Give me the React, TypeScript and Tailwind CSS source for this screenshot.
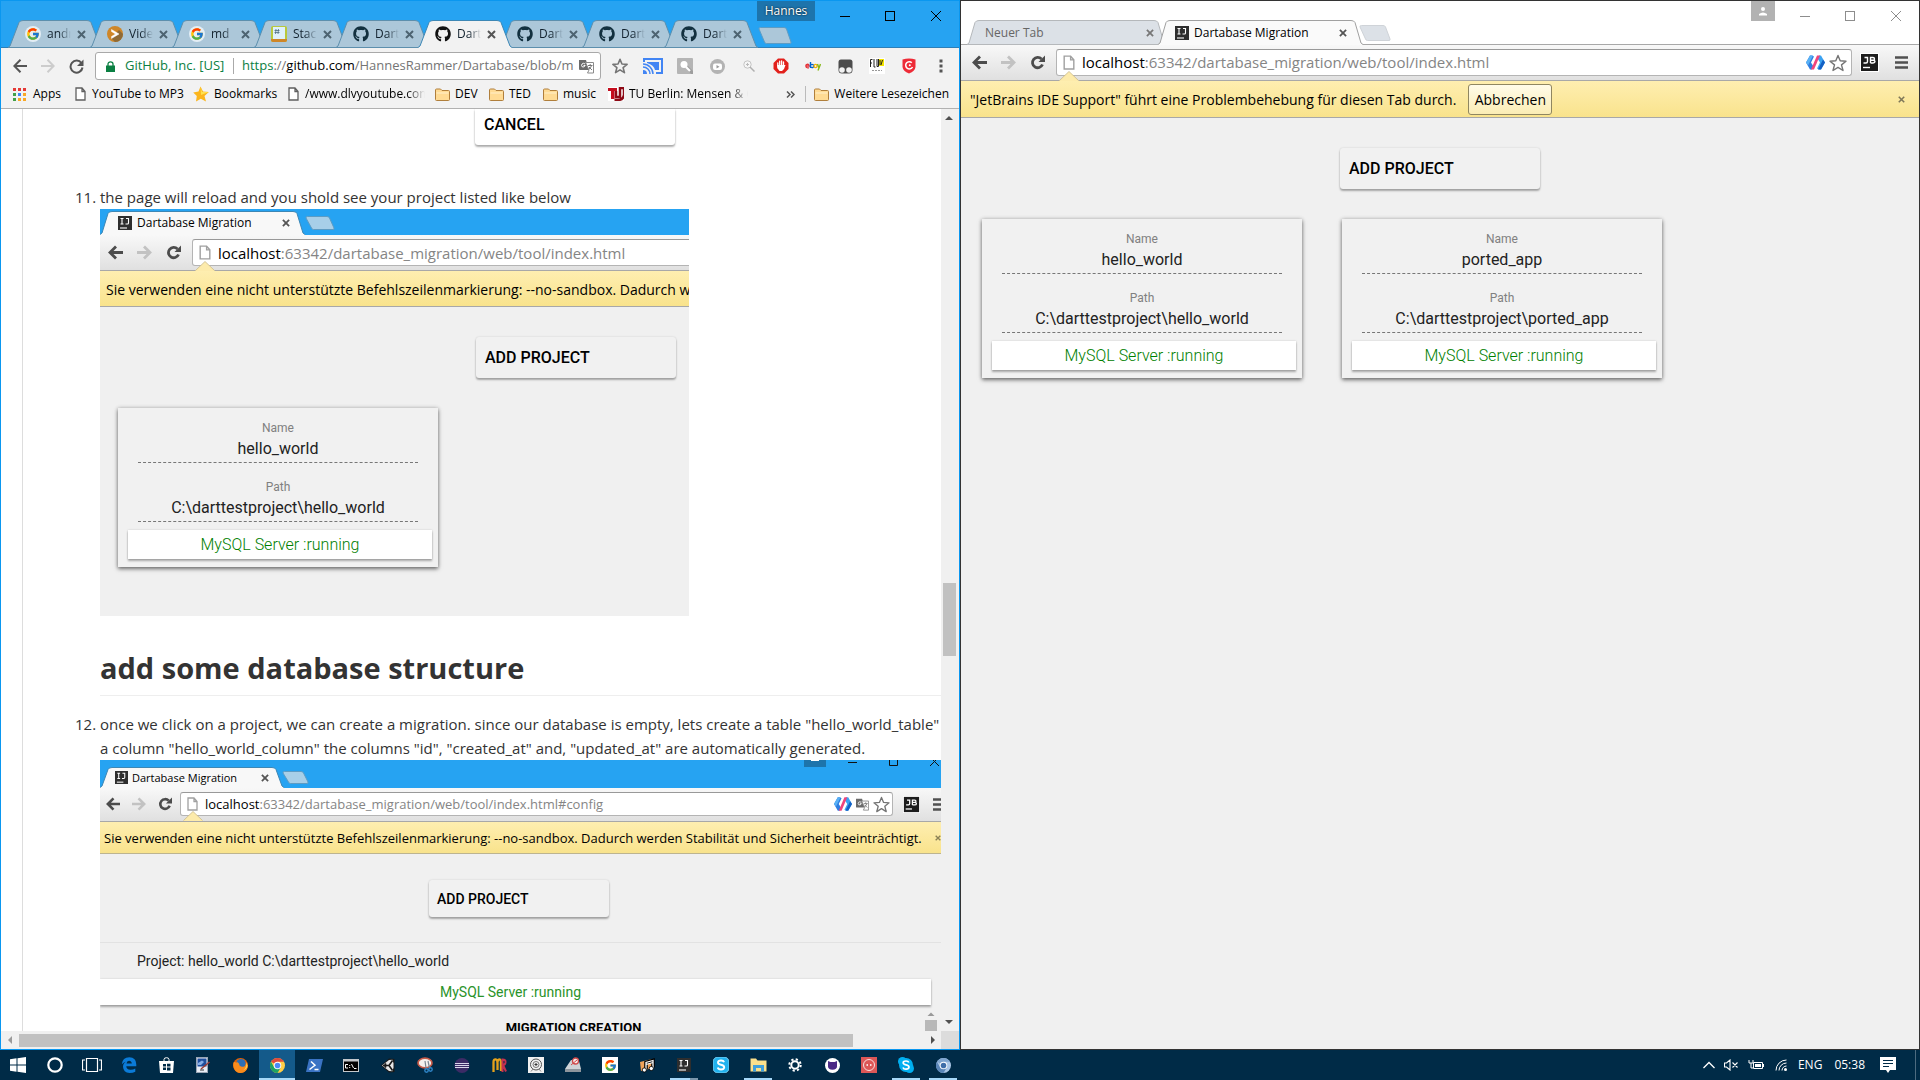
import React from "react";
import { FaGithub } from "react-icons/fa";
import { FcGoogle } from "react-icons/fc";

/* ---------- shapes ---------- */

function TabShape({ w, h, fill, stroke, slope = 12, open = true }: { w: number; h: number; fill: string; stroke: string; slope?: number; open?: boolean }) {
  const d = `M0 ${h - 0.5} L2 ${h - 2} L${slope - 1} 2.5 Q${slope} 0.5 ${slope + 3} 0.5 H${w - slope - 3} Q${w - slope} 0.5 ${w - slope + 1} 2.5 L${w - 2} ${h - 2} L${w} ${h - 0.5}`;
  return (
    <svg className="absolute inset-0" width={w} height={h} viewBox={`0 0 ${w} ${h}`} aria-hidden="true">
      <path d={`${d} V${h} H0 Z`} fill={fill} />
      <path d={open ? d : `${d} Z`} fill="none" stroke={stroke} />
    </svg>
  );
}

function NewTabShape({ w, h, fill, stroke }: { w: number; h: number; fill: string; stroke: string }) {
  return (
    <svg width={w} height={h} viewBox={`0 0 ${w} ${h}`} aria-hidden="true">
      <path d={`M2.5 0.5 H${w - 8} Q${w - 6} 0.5 ${w - 5.5} 2 L${w - 1} ${h - 2} Q${w - 0.5} ${h - 0.5} ${w - 2} ${h - 0.5} H8.5 Q7 ${h - 0.5} 6.5 ${h - 2} L1 2 Q0.5 0.5 2.5 0.5Z`} fill={fill} stroke={stroke} />
    </svg>
  );
}

function Cross({ size = 9, color = "#4f5b66", width = 2 }: { size?: number; color?: string; width?: number }) {
  return (
    <svg width={size} height={size} viewBox="0 0 9 9" aria-hidden="true">
      <path d="M1 1 L8 8 M8 1 L1 8" stroke={color} strokeWidth={width} />
    </svg>
  );
}

function IjIcon({ size = 14 }: { size?: number }) {
  return (
    <svg width={size} height={size} viewBox="0 0 14 14" aria-hidden="true">
      <rect width="14" height="14" fill="#2e2e2e" />
      <path d="M2.500 2.500 H5.500 M4 2.500 V8 M2.500 8 H5.500 M8 2.500 H10.500 V7 Q10.500 8 9.500 8 H7.500" stroke="#fff" strokeWidth="1.100" fill="none" />
      <path d="M2 12 H9" stroke="#fff" strokeWidth="1.100" />
    </svg>
  );
}

function JbIcon({ size = 19 }: { size?: number }) {
  return (
    <svg width={size} height={size} viewBox="0 0 19 19" aria-hidden="true">
      <rect width="19" height="19" fill="#fff" />
      <rect x="1" y="1" width="17" height="17" fill="#1c1c1c" />
      <path d="M4.500 4.500 H7.500 V8.500 Q7.500 10 6 10 H3.500 M10.500 10 V4.500 H13 Q14.500 4.500 14.500 5.900 Q14.500 7.200 13 7.200 H10.500 M13 7.200 Q15 7.200 15 8.600 Q15 10 13 10 H10.500" stroke="#fff" strokeWidth="1.400" fill="none" />
      <path d="M3 14.500 H10" stroke="#fff" strokeWidth="1.400" />
    </svg>
  );
}

function PolymerIcon({ size = 19 }: { size?: number }) {
  return (
    <svg width={size} height={size} viewBox="0 0 19 16" aria-hidden="true">
      <path d="M6 1 L4 1 L0 8 L4 15 H6 L7.500 12 L5 8 L8 2Z" fill="#2f7de1" />
      <path d="M13 15 H15 L19 8 L15 1 H13 L11.500 4 L14 8 L11 14Z" fill="#3ba3f2" />
      <path d="M4 1 L0 8 L2 11 L7 1Z" fill="#58b1f5" />
      <path d="M15 15 L19 8 L17 5 L12 15Z" fill="#1560c4" />
      <path d="M11 1 H14 L8 15 H5Z" fill="#f0447c" />
    </svg>
  );
}

function StarOutline({ size = 17, width = 1.4 }: { size?: number; width?: number }) {
  return (
    <svg width={size} height={size} viewBox="0 0 18 18" aria-hidden="true">
      <path d="M9 1.500 L11.200 6.800 L17 7.200 L12.500 10.900 L14 16.500 L9 13.400 L4 16.500 L5.500 10.900 L1 7.200 L6.800 6.800Z" fill="none" stroke="#757575" strokeWidth={width} strokeLinejoin="round" />
    </svg>
  );
}

function PageIcon({ w = 11, color = "#5f5f5f" }: { w?: number; color?: string }) {
  return (
    <svg width={w} height={w + 3} viewBox="0 0 11 14" aria-hidden="true">
      <path d="M1 1 H7 L10 4.500 V13 H1Z M7 1 V4.500 H10" fill="#fff" stroke={color} strokeWidth="1.300" />
    </svg>
  );
}

function FolderIcon() {
  return (
    <svg width="15" height="13" viewBox="0 0 15 13" aria-hidden="true">
      <path d="M0.500 11.500 V2 Q0.500 1 1.500 1 H5.500 L7 2.500 H13.500 Q14.500 2.500 14.500 3.500 V11.500 Q14.500 12.500 13.500 12.500 H1.500 Q0.500 12.500 0.500 11.500Z" fill="#ffdb94" stroke="#b07f3c" />
      <path d="M1.500 5 H13.500" stroke="#fff0cc" />
    </svg>
  );
}

function TranslateIcon({ size = 15 }: { size?: number }) {
  return (
    <svg width={size} height={size} viewBox="0 0 15 15" aria-hidden="true">
      <path d="M0 1 H7 L10 11 H1 Q0 11 0 10Z" fill="#6b6b6b" />
      <path d="M6.500 3.500 H14.500 V14 H8.500 L10 11Z" fill="#fff" stroke="#8a8a8a" />
      <path d="M6 5 Q4.500 3.600 3 5 Q2 6.500 3.200 7.800 Q5 8.800 6.200 6.500 H4.500" stroke="#fff" fill="none" />
      <path d="M9 6.500 H13.500 M11.200 5 V6.500 M12.500 6.500 Q12 9 9.500 10.500 M10 8 L13 11" stroke="#777" fill="none" />
    </svg>
  );
}

/* ---------- window controls ---------- */

function WindowControls({ color }: { color: string }) {
  return (
    <div className="flex h-[29px] items-center">
      <button type="button" aria-label="Minimize" className="flex w-[45px] justify-center">
        <svg width="10" height="10" viewBox="0 0 10 10"><path d="M0 5.500 H10" stroke={color} /></svg>
      </button>
      <button type="button" aria-label="Maximize" className="flex w-[45px] justify-center">
        <svg width="10" height="10" viewBox="0 0 10 10"><rect x="0.500" y="0.500" width="9" height="9" fill="none" stroke={color} /></svg>
      </button>
      <button type="button" aria-label="Close window" className="flex w-[47px] justify-center">
        <svg width="10" height="10" viewBox="0 0 10 10"><path d="M0 0 L10 10 M10 0 L0 10" stroke={color} /></svg>
      </button>
    </div>
  );
}

/* ---------- left browser ---------- */

function SizzleIcon() {
  return (
    <svg width="16" height="16" viewBox="0 0 16 16">
      <circle cx="8" cy="8" r="8" fill="#cf8628" />
      <path d="M8 16 A8 8 0 0 0 16 8 L12 4 L4 12Z" fill="#8f6a35" />
      <path d="M4.500 3.500 L12 8 L4.500 12.500 V10.500 L8.500 8 L4.500 5.500Z" fill="#fff" stroke="#fff" strokeWidth="0.500" />
    </svg>
  );
}

function StackIcon() {
  return (
    <svg width="16" height="16" viewBox="0 0 16 16">
      <rect width="16" height="16" rx="2" fill="#b9c83c" />
      <path d="M0 13 H16 V14 Q16 16 14 16 H2 Q0 16 0 14Z" fill="#cf8628" />
      <rect x="2" y="1" width="12" height="12" fill="#dff0fb" />
      <path d="M5 3 L4.500 8 M7.500 3 L7 8 M3.500 4.500 H8.500 M3.500 6.500 H8.500" stroke="#4f6f80" strokeWidth="0.800" />
    </svg>
  );
}

const leftTabs = [
  { title: "andr", icon: <FcGoogle size={14} />, round: true },
  { title: "Vide", icon: <SizzleIcon /> },
  { title: "md", icon: <FcGoogle size={14} />, round: true },
  { title: "Stac", icon: <StackIcon /> },
  { title: "Dart", icon: <FaGithub size={16} color="#12303f" /> },
  { title: "Dart", icon: <FaGithub size={16} color="#111" />, active: true },
  { title: "Dart", icon: <FaGithub size={16} color="#12303f" /> },
  { title: "Dart", icon: <FaGithub size={16} color="#12303f" /> },
  { title: "Dart", icon: <FaGithub size={16} color="#12303f" /> },
];

function LeftTabs() {
  return (
    <div className="relative flex h-[47px] items-end border-b border-[#2d7fb8] bg-[#26a3f2] pl-[7px]">
      <div role="tablist" aria-label="Open tabs" className="flex">
        {leftTabs.map((t, i) => (
          <div key={i} className={t.active ? "relative z-10 -mr-3 -mb-px h-7 w-[94px]" : "relative -mr-3 -mb-px h-7 w-[94px]"}>
            <TabShape w={94} h={28} fill={t.active ? "#f2f2f2" : "#acc7d9"} stroke={t.active ? "#3d87b5" : "#5d8fad"} open={!!t.active} />
            <div className="relative flex h-full items-center pl-[17px]">
              <button type="button" role="tab" aria-selected={!!t.active} className="flex items-center gap-1.5 text-[12px] text-[#12222e]">
                <span className={t.round ? "flex size-4 items-center justify-center rounded-full bg-[#e4eef5]" : "flex size-4"}>{t.icon}</span>
                <span className="w-6 overflow-hidden whitespace-nowrap text-left [mask-image:linear-gradient(to_right,black_50%,transparent)]">{t.title}</span>
              </button>
              <button type="button" aria-label={`Close tab ${i + 1}`} className="ml-1.5 flex"><Cross color={t.active ? "#555" : "#4d6371"} /></button>
            </div>
          </div>
        ))}
      </div>
      <button type="button" aria-label="New tab" className="mb-[3px] ml-3">
        <NewTabShape w={34} h={17} fill="#acc7d9" stroke="#5d9cc4" />
      </button>
      <div className="absolute top-0 right-0 flex">
        <button type="button" className="mr-[7px] h-5 w-[58px] bg-[#1d74ac] text-[12px] leading-5 text-white [text-shadow:0_0_2px_#000]">Hannes</button>
        <WindowControls color="#000" />
      </div>
    </div>
  );
}

function ThinArrow({ flip, color }: { flip?: boolean; color: string }) {
  return (
    <svg width="14" height="14" viewBox="0 0 14 14" className={flip ? "rotate-180" : ""} aria-hidden="true">
      <path d="M14 7 H1.500 M7.500 0.800 L1.300 7 L7.500 13.200" stroke={color} strokeWidth="2" fill="none" />
    </svg>
  );
}

const extensions: { label: string; icon: React.ReactNode }[] = [
  { label: "Cast", icon: <svg width="20" height="16" viewBox="0 0 20 16"><path d="M1 4 V1 H19 V15 H13" stroke="#4285f4" strokeWidth="2" fill="none" /><path d="M4 4 H16 V12 H12 Q11 7 4 5Z" fill="#4285f4" /><path d="M0 12 A4 4 0 0 1 4 16 H0Z" fill="#4285f4" /><path d="M0 9 A7 7 0 0 1 7 16 M0 6 A10 10 0 0 1 10 16" stroke="#4285f4" strokeWidth="1.500" fill="none" /></svg> },
  { label: "Search", icon: <svg width="16" height="16" viewBox="0 0 16 16"><rect width="16" height="16" rx="1" fill="#b5b5b5" /><path d="M9 10 L14 16 H16 V13 L11 8Z" fill="#9d9d9d" /><circle cx="7" cy="6.500" r="3.500" fill="#fff" /><path d="M9 9 L13 13" stroke="#fff" strokeWidth="2.200" /></svg> },
  { label: "Video", icon: <svg width="15" height="15" viewBox="0 0 15 15"><circle cx="7.500" cy="7.500" r="7.500" fill="#b3b3b3" /><rect x="3" y="4.500" width="9" height="6.500" rx="2" fill="#fff" /><path d="M6.500 6 L9.500 7.700 L6.500 9.500Z" fill="#999" /></svg> },
  { label: "Magnify", icon: <svg width="12" height="12" viewBox="0 0 12 12"><circle cx="4.500" cy="4.500" r="3.700" fill="#f6f6f6" stroke="#c4c4c4" /><path d="M7 7 L11.500 11.500" stroke="#b0b0b0" strokeWidth="1.500" /><path d="M3 4.500 H6 M4.500 3 V6" stroke="#bbb" /></svg> },
  { label: "Blocker", icon: <svg width="16" height="16" viewBox="0 0 16 16"><path d="M5 0.500 H11 L15.500 5 V11 L11 15.500 H5 L0.500 11 V5Z" fill="#e2211c" /><path d="M4.800 8 V5 M6.700 7.500 V3.200 M8.600 7.500 V2.800 M10.500 7.500 V3.800" stroke="#fff" strokeWidth="1.300" strokeLinecap="round" /><path d="M4.200 7 H11.100 L12.500 7 L11 11 L9 13 H6.500 L4.200 10Z" fill="#fff" /></svg> },
  { label: "eBay", icon: <svg width="16" height="10" viewBox="0 0 16 10"><path d="M1 5 H4.200 Q4 3.200 2.500 3.200 Q0.800 3.400 0.800 5 Q0.900 6.800 2.600 6.800 H4" fill="none" stroke="#e53238" strokeWidth="1.300" /><path d="M5.500 1 V7" stroke="#0064d2" strokeWidth="1.400" /><circle cx="7" cy="5" r="1.700" fill="none" stroke="#0064d2" strokeWidth="1.300" /><circle cx="10.500" cy="5" r="1.600" fill="none" stroke="#f5af02" strokeWidth="1.300" /><path d="M12.500 3 L14 7 M15.500 3 L13 9.500" stroke="#86b817" strokeWidth="1.400" /></svg> },
  { label: "Scripts", icon: <svg width="15" height="15" viewBox="0 0 15 15"><path d="M0.500 3 Q0.500 0.500 3 0.500 H12 Q14.500 0.500 14.500 3 V11 Q14.500 14.500 11 14.500 H4 Q0.500 14.500 0.500 11Z" fill="#4c4c4c" /><circle cx="4" cy="11" r="2.800" fill="#f2f2f2" /><circle cx="11" cy="11" r="2.800" fill="#f2f2f2" /></svg> },
  { label: "Flux", icon: <svg width="16" height="16" viewBox="0 0 16 16"><rect width="16" height="16" fill="#fff" /><rect x="10" y="1" width="5" height="7" fill="#f4e400" /><path d="M1.500 9 V1.500 H3.500 M1.500 5 H3 M5 1 V9 H6.500 M8 1 V8.500 H9.500 V1 M11 2 V7 M13.500 2 L12 7" stroke="#222" fill="none" /><path d="M3 12.500 H13" stroke="#999" strokeDasharray="2 1" /></svg> },
  { label: "Shield", icon: <svg width="14" height="16" viewBox="0 0 14 16"><path d="M0.500 1.500 Q7 -0.500 13.500 1.500 V9 Q13 13 7 15.500 Q1 13 0.500 9Z" fill="#ee2b37" /><path d="M9.800 4.700 A3.600 3.600 0 1 0 10.500 9" stroke="#fff" strokeWidth="1.500" fill="none" /><circle cx="7.800" cy="7.200" r="1" fill="#fff" /></svg> },
];

function LeftToolbar() {
  return (
    <div className="flex h-8 items-end bg-[#f2f2f2] pl-3">
      <div className="flex h-7 items-center gap-3.5 pr-[11px]">
        <button type="button" aria-label="Back"><ThinArrow color="#555" /></button>
        <button type="button" aria-label="Forward"><ThinArrow color="#ccc" flip /></button>
        <button type="button" aria-label="Reload">
          <svg width="15" height="15" viewBox="0 0 15 15" aria-hidden="true">
            <path d="M12.500 4.200 A6 6 0 1 0 13.500 8.500" stroke="#555" strokeWidth="2" fill="none" />
            <path d="M14.500 0.500 V7 H8Z" fill="#555" />
          </svg>
        </button>
      </div>
      <div className="relative flex h-7 min-w-0 flex-1 items-center rounded-[3px] border border-[#a9a9a9] bg-white pl-2.5 text-[13px] whitespace-nowrap">
        <input aria-label="Address" className="absolute inset-0 bg-transparent outline-none" />
        <svg width="9" height="11" viewBox="0 0 9 11" aria-hidden="true"><path d="M0 4.500 H9 V11 H0Z" fill="#0b8043" /><path d="M2 5 V3 A2.500 2.200 0 0 1 7 3 V5" stroke="#0b8043" strokeWidth="1.300" fill="none" /></svg>
        <span className="ml-2.5 w-[100px] text-[#0b8043]">GitHub, Inc. [US]</span>
        <span className="mx-2 h-4 w-px bg-[#aaa]" />
        <span className="min-w-0 flex-1 overflow-hidden text-[#757575]"><span className="text-[#0b8043]">https</span>://<span className="text-black">github.com</span>/HannesRammer/Dartabase/blob/m</span>
        <span className="mr-1.5"><TranslateIcon /></span>
      </div>
      <div className="flex h-7 items-center pr-4 pl-[11px]">
        <button type="button" aria-label="Bookmark this page" className="mr-[9px]"><StarOutline size={16} width={1.8} /></button>
        {extensions.map((e) => (
          <button type="button" key={e.label} aria-label={e.label} className="flex w-8 justify-center">{e.icon}</button>
        ))}
        <button type="button" aria-label="Menu" className="ml-3.5">
          <svg width="4" height="14" viewBox="0 0 4 14"><path d="M0.500 0.500h3v3h-3z M0.500 5.500h3v3h-3z M0.500 10.500h3v3h-3z" fill="#555" /></svg>
        </button>
      </div>
    </div>
  );
}

function Bookmark({ icon, children, fade, className }: { icon: React.ReactNode; children: string; fade?: boolean; className: string }) {
  return (
    <a href="#" className={`flex shrink-0 items-center ${className}`}>
      {icon}
      <span className={fade ? "min-w-0 flex-1 overflow-hidden [mask-image:linear-gradient(to_right,black_85%,transparent)]" : ""}>{children}</span>
    </a>
  );
}

function BookmarksBar() {
  const colors = ["#e53935", "#e53935", "#e53935", "#43a047", "#4285f4", "#f9a825", "#43a047", "#f9a825", "#f9a825"];
  return (
    <nav aria-label="Bookmarks" className="flex h-[29px] items-center border-b border-[#b1b1b1] bg-[#f2f2f2] pl-3 text-[12px] whitespace-nowrap text-black">
      <Bookmark className="w-[62px] gap-[7px]" icon={<svg width="13" height="13" viewBox="0 0 13 13" aria-hidden="true">{colors.map((c, i) => <rect key={i} x={(i % 3) * 5} y={Math.floor(i / 3) * 5} width="3" height="3" fill={c} />)}</svg>}>Apps</Bookmark>
      <Bookmark className="w-[118px] gap-1.5" icon={<PageIcon />}>YouTube to MP3</Bookmark>
      <Bookmark className="w-[95px] gap-[5px]" icon={<svg width="16" height="16" viewBox="0 0 16 16" aria-hidden="true"><path d="M7.500 0.500 L10 5.500 L15.800 6 L11.500 10 L13 15.500 L7.800 12.800 L3 15.500 L3.800 10 L0.200 6.500 L5.500 5.500Z" fill="#fbb51c" /><path d="M7.500 0.500 L9 6 L15.800 6 L8 9Z" fill="#ffe14d" /></svg>}>Bookmarks</Bookmark>
      <Bookmark className="mr-2.5 w-[137px] gap-1.5" fade icon={<PageIcon />}>/www.dlvyoutube.com</Bookmark>
      <Bookmark className="w-[54px] gap-[5px]" icon={<FolderIcon />}>DEV</Bookmark>
      <Bookmark className="w-[54px] gap-[5px]" icon={<FolderIcon />}>TED</Bookmark>
      <Bookmark className="w-[65px] gap-[5px]" icon={<FolderIcon />}>music</Bookmark>
      <Bookmark className="w-[140px] gap-[5px]" fade icon={<svg width="16" height="14" viewBox="0 0 16 14" aria-hidden="true"><rect width="16" height="14" fill="#fff" /><path d="M0 1 H9 V4 H6.500 V12 H3 V4 H0Z" fill="#c40d1e" /><path d="M8 4 V10 H12 V1 H16 V8 Q15 13 10 13 H6.500" fill="none" stroke="#8d0915" strokeWidth="2.500" /></svg>}>TU Berlin: Mensen &amp; C</Bookmark>
      <button type="button" aria-label="More bookmarks" className="ml-auto px-2.5">
        <svg width="9" height="7" viewBox="0 0 9 7"><path d="M1 0.500 L4 3.500 L1 6.500 M5 0.500 L8 3.500 L5 6.500" stroke="#555" strokeWidth="1.500" fill="none" /></svg>
      </button>
      <span className="mr-2 h-4 w-px bg-[#bbb]" />
      <Bookmark className="mr-2.5 gap-[5px]" icon={<FolderIcon />}>Weitere Lesezeichen</Bookmark>
    </nav>
  );
}

/* ---------- migration tool ---------- */

const raised = "shadow-[0_2px_2px_rgba(0,0,0,0.3),0_0_2px_rgba(0,0,0,0.15)]";

function AddButton({ className = "" }: { className?: string }) {
  return (
    <button type="button" className={`block h-[41px] w-[200px] rounded-[3px] bg-[#f1f1f1] pl-[9px] text-left font-[Roboto,sans-serif] text-[16px] font-medium text-black ${raised} ${className}`}>ADD PROJECT</button>
  );
}

function Field({ label, value }: { label: string; value: string }) {
  return (
    <div className="mx-5 border-b border-dashed border-[#777] pb-0.5">
      <div className="text-[12px] leading-5 text-[#808080]">{label}</div>
      <div className="text-[16px] leading-[22px] text-[#222]">{value}</div>
    </div>
  );
}

function ProjectCard({ name }: { name: string }) {
  return (
    <section className="flex w-[320px] flex-col bg-[#f1f1f1] pt-2.5 pb-2 text-center font-[Roboto,sans-serif] shadow-[0_2px_4px_rgba(0,0,0,0.5),0_0_4px_rgba(0,0,0,0.2)]">
      <div className="flex flex-col gap-3.5">
        <Field label="Name" value={name} />
        <Field label="Path" value={`C:\\darttestproject\\${name}`} />
      </div>
      <div className={`mt-2 mr-1.5 ml-2.5 h-[29px] bg-white text-[16px] leading-[29px] font-light text-[#008000] ${raised}`}>MySQL Server :running</div>
    </section>
  );
}

function OldArrow({ size, color, flip }: { size: number; color: string; flip?: boolean }) {
  return (
    <svg width={size} height={size} viewBox="0 0 15 15" className={flip ? "rotate-180" : ""} aria-hidden="true">
      <path d="M15 7.500 H2 M8 1.500 L2 7.500 L8 13.500" stroke={color} strokeWidth="2.800" fill="none" />
    </svg>
  );
}

function OldToolbar({ compact, url, children, className = "" }: { compact?: boolean; url: string; children?: React.ReactNode; className?: string }) {
  const s = compact ? 14 : 15;
  return (
    <div className={`flex items-start border-b border-[#a8a8a8] bg-linear-to-b from-[#f8f8f8] to-[#e0e0e0] ${compact ? "h-[34px] pt-1 pl-1.5" : "h-9 pt-1"} ${className}`}>
      <div className={`flex items-center ${compact ? "h-6 gap-3 pr-2" : "h-[27px] gap-3.5 pr-[11px]"}`}>
        <button type="button" aria-label="Back"><OldArrow size={s} color="#4c4c4c" /></button>
        <button type="button" aria-label="Forward"><OldArrow size={s} color="#c2c2c2" flip /></button>
        <button type="button" aria-label="Reload">
          <svg width={s} height={s} viewBox="0 0 15 15" aria-hidden="true">
            <path d="M11.500 4 A5.200 5.200 0 1 0 12.500 9.500" stroke="#4c4c4c" strokeWidth="2.800" fill="none" />
            <path d="M15 0.500 V7 H8.500Z" fill="#4c4c4c" />
          </svg>
        </button>
      </div>
      <div className={`relative flex min-w-0 flex-1 items-center rounded-[3px] border border-[#b4b4b4] border-t-[#999] bg-white whitespace-nowrap ${compact ? "h-6 pl-1.5 text-[13px]" : "h-[27px] pl-1.5 text-[15px]"}`}>
        <input aria-label="Address" className="absolute inset-0 bg-transparent outline-none" />
        <span className="relative flex h-full items-center">
          <PageIcon w={compact ? 11 : 12} color="#a0a0a0" />
          <svg className="absolute -bottom-1.5 -left-1 z-10" width="20" height="10" viewBox="0 0 20 10" aria-hidden="true">
            <path d="M0 10 L10 0.500 L20 10Z" fill="#fdebab" />
            <path d="M0.500 9.500 L10 0.500 L19.500 9.500" stroke="#c9b98a" strokeWidth="0.800" fill="none" />
          </svg>
        </span>
        <span className="ml-[7px] flex-1 overflow-hidden text-[#858585]"><span className="text-black">localhost</span>:63342{url}</span>
        {children}
      </div>
    </div>
  );
}

function Burger() {
  return <svg width="13" height="13" viewBox="0 0 13 13" aria-hidden="true"><path d="M0 1.500 H13 M0 6.500 H13 M0 11.500 H13" stroke="#505050" strokeWidth="2.600" /></svg>;
}

function ShotOne() {
  return (
    <figure className="h-[407px] w-[589px] overflow-hidden bg-[#f0f0f0]">
      <div className="flex h-[26px] items-end bg-[#26a3f2]">
        <div className="relative h-6 w-[205px]">
          <TabShape w={205} h={24} slope={9} fill="#f8f8f8" stroke="#3d87b5" />
          <div className="relative flex h-full items-center pl-[18px] text-[12px] text-black">
            <IjIcon /><span className="ml-[5px] flex-1 whitespace-nowrap">Dartabase Migration</span>
            <span className="mr-[15px]"><Cross size={8} color="#555" /></span>
          </div>
        </div>
        <span className="mb-[5px]"><NewTabShape w={30} h={14} fill="#a8cfe8" stroke="#5d9cc4" /></span>
      </div>
      <OldToolbar url="/dartabase_migration/web/tool/index.html" className="w-[640px] pl-2" />
      <div className="h-9 border-b border-[#a8a8a8] bg-linear-to-b from-[#feeeb0] to-[#f9e38c] pl-1.5 text-[14px] leading-[37px] whitespace-nowrap text-black">Sie verwenden eine nicht unterstützte Befehlszeilenmarkierung: --no-sandbox. Dadurch w</div>
      <div className="pt-[30px] pl-[18px]">
        <AddButton className="mb-[30px] ml-[358px]" />
        <ProjectCard name="hello_world" />
      </div>
    </figure>
  );
}

function ShotTwo() {
  return (
    <figure className="flex h-[272px] flex-col overflow-hidden bg-[#f0f0f0]">
      <div className="relative flex h-7 shrink-0 items-end bg-[#26a3f2]">
        <div className="relative h-[21px] w-[184px]">
          <TabShape w={184} h={21} slope={9} fill="#f8f8f8" stroke="#3d87b5" />
          <div className="relative flex h-full items-center pl-[15px] text-[11px] text-black">
            <IjIcon size={13} /><span className="ml-1 flex-1 whitespace-nowrap">Dartabase Migration</span>
            <span className="mr-[15px]"><Cross size={8} color="#555" /></span>
          </div>
        </div>
        <span className="-ml-0.5 mb-1"><NewTabShape w={27} h={13} fill="#a8cfe8" stroke="#5d9cc4" /></span>
        <svg className="absolute top-0 right-0" width="137" height="8" viewBox="0 0 137 8" aria-hidden="true">
          <rect width="22" height="7" fill="#1d74ac" /><path d="M7 0 H15 V1 H7Z" fill="#fff" />
          <path d="M44 2.500 H53 M85.500 0 V5.500 H93.500 V0 M126 6 L130.500 1.500 L135 6 M129 0 L130.500 1.500 L132 0" stroke="#111" fill="none" />
        </svg>
      </div>
      <div className="flex shrink-0">
        <OldToolbar compact url="/dartabase_migration/web/tool/index.html#config" className="min-w-0 flex-1">
          <span className="mr-0.5 flex items-center gap-1"><PolymerIcon size={18} /><TranslateIcon size={13} /><StarOutline /></span>
        </OldToolbar>
        <div className="flex h-[34px] w-12 items-center justify-between border-b border-[#a8a8a8] bg-linear-to-b from-[#f8f8f8] to-[#e0e0e0] pl-2.5">
          <JbIcon size={17} />
          <span className="w-2 overflow-hidden"><Burger /></span>
        </div>
      </div>
      <div className="flex h-8 shrink-0 items-center justify-between border-b border-[#bdb48f] bg-linear-to-b from-[#feeeb0] to-[#f9e38c] pl-1 text-[13px] whitespace-nowrap text-black">
        <span>Sie verwenden eine nicht unterstützte Befehlszeilenmarkierung: --no-sandbox. Dadurch werden Stabilität und Sicherheit beeinträchtigt.</span>
        <Cross size={6} color="#8a8055" />
      </div>
      <div className="font-[Roboto,sans-serif]">
        <button type="button" className={`mt-[26px] ml-[329px] block h-[37px] w-[180px] rounded-[3px] bg-[#f1f1f1] pl-2 text-left text-[14px] font-medium text-black ${raised}`}>ADD PROJECT</button>
        <div className="mt-[25px] border-t border-[#e2e2e2] pl-[37px] text-[14px] leading-9 text-[#222]">Project: hello_world C:\darttestproject\hello_world</div>
        <div className={`mr-2.5 h-[26px] bg-white pr-2.5 text-center text-[14px] leading-[27px] text-[#2a932a] ${raised}`}>MySQL Server :running</div>
        <div className="flex items-start">
          <div className="mt-3.5 flex-1 pl-[122px] text-center text-[13px] leading-[18px] font-bold text-black">MIGRATION CREATION</div>
          <svg className="mt-1.5 mr-1" width="12" height="20" viewBox="0 0 12 20" aria-hidden="true"><path d="M2.500 5 L6 1.500 L9.500 5Z" fill="#999" /><rect y="9" width="12" height="11" fill="#b8b8b8" /></svg>
        </div>
      </div>
    </figure>
  );
}

function LeftContent() {
  return (
    <div className="flex min-h-0 flex-1">
      <div className="flex min-w-0 flex-1 flex-col">
        <main className="min-h-0 flex-1 overflow-hidden bg-white pl-[21px]">
          <article className="h-full border-l border-[#ddd] pl-[77px] text-[15px] leading-6 text-[#333]">
            <button type="button" className={`ml-[375px] block h-9 w-[200px] rounded-b-[3px] bg-white pb-1 pl-[9px] text-left font-[Roboto,sans-serif] text-[16px] font-medium text-black ${raised}`}>CANCEL</button>
            <ol start={11} className="mt-10 list-decimal">
              <li>
                <p>the page will reload and you shold see your project listed like below</p>
                <ShotOne />
                <h2 className="mt-8 border-b border-[#eee] pb-[7px] text-[29px] leading-10 font-bold">add some database structure</h2>
              </li>
              <li className="mt-4">
                <p className="overflow-hidden whitespace-nowrap">once we click on a project, we can create a migration. since our database is empty, lets create a table "hello_world_table" an<br />a column "hello_world_column" the columns "id", "created_at" and, "updated_at" are automatically generated.</p>
                <ShotTwo />
              </li>
            </ol>
          </article>
        </main>
        <div className="flex h-[18px] shrink-0 items-center bg-[#f0f0f0]">
          <svg className="mx-[7px]" width="4" height="8" viewBox="0 0 4 8"><path d="M4 0 L0 4 L4 8Z" fill="#9a9a9a" /></svg>
          <div className="flex-1"><div className="h-[13px] w-[92%] bg-[#c1c1c1]" /></div>
          <svg className="mx-1.5" width="4" height="8" viewBox="0 0 4 8"><path d="M0 0 L4 4 L0 8Z" fill="#505050" /></svg>
        </div>
      </div>
      <div className="flex w-[18px] shrink-0 flex-col bg-[#f0f0f0]">
        <div className="flex min-h-0 flex-1 flex-col items-center py-[7px] pr-0.5">
          <svg width="8" height="4" viewBox="0 0 8 4"><path d="M0 4 L4 0 L8 4Z" fill="#505050" /></svg>
          <div className="flex-[462]" />
          <div className="h-[73px] w-[13px] bg-[#c1c1c1]" />
          <div className="flex-[364]" />
          <svg width="8" height="4" viewBox="0 0 8 4"><path d="M0 0 L4 4 L8 0Z" fill="#505050" /></svg>
        </div>
        <div className="h-[18px] bg-[#dcdcdc]" />
      </div>
    </div>
  );
}

/* ---------- right browser ---------- */

function RightWindow() {
  return (
    <section aria-label="Dartabase Migration window" className="flex min-w-0 flex-1 flex-col border border-[#333] bg-[#f0f0f0]">
      <div className="relative flex h-11 shrink-0 items-end border-b border-[#a8a8a8] bg-white pl-1.5">
        <div className="relative -mr-2 -mb-px h-[25px] w-[199px]">
          <TabShape w={199} h={25} slope={9} fill="#dce1e7" stroke="#b5b8bb" open={false} />
          <div className="relative flex h-full items-center justify-between pr-3 pl-[18px] text-[12px] text-[#666]">
            <button type="button">Neuer Tab</button>
            <button type="button" aria-label="Close Neuer Tab"><Cross size={8} color="#777" /></button>
          </div>
        </div>
        <div className="relative z-10 -mb-px h-[25px] w-[205px]">
          <TabShape w={205} h={25} slope={9} fill="#fafafa" stroke="#a0a0a0" />
          <div className="relative flex h-full items-center pr-4 pl-[17px] text-[12px] text-black">
            <button type="button" className="flex flex-1 items-center gap-[5px]"><IjIcon /><span>Dartabase Migration</span></button>
            <button type="button" aria-label="Close Dartabase Migration"><Cross size={8} color="#555" /></button>
          </div>
        </div>
        <button type="button" aria-label="New tab" className="-ml-1 mb-[3px]"><NewTabShape w={32} h={16} fill="#dce1e7" stroke="#cfd3d8" /></button>
        <div className="absolute top-0 right-0 flex">
          <button type="button" aria-label="User" className="mr-[7px] flex h-5 w-6 items-center justify-center bg-[#b2b2b2]">
            <svg width="8" height="9" viewBox="0 0 8 9"><circle cx="4" cy="2" r="2" fill="#fff" /><path d="M0 8.500 V7 Q4 4 8 7 V8.500Z" fill="#fff" /></svg>
          </button>
          <WindowControls color="#8d8d8d" />
        </div>
      </div>
      <div className="flex shrink-0">
        <OldToolbar url="/dartabase_migration/web/tool/index.html" className="min-w-0 flex-1 pl-[11px]">
          <span className="mr-1 flex items-center gap-1"><PolymerIcon size={19} /><StarOutline size={18} /></span>
        </OldToolbar>
        <div className="flex h-9 items-center gap-4 border-b border-[#a8a8a8] bg-linear-to-b from-[#f8f8f8] to-[#e0e0e0] pr-[11px] pl-2">
          <button type="button" aria-label="JetBrains"><JbIcon /></button>
          <button type="button" aria-label="Menu"><Burger /></button>
        </div>
      </div>
      <div className="flex h-[37px] shrink-0 items-center border-b border-[#a8a8a8] bg-linear-to-b from-[#feeeb0] to-[#f9e38c] pr-3.5 pl-[9px] text-[14px] text-black">
        <span>"JetBrains IDE Support" führt eine Problembehebung für diesen Tab durch.</span>
        <button type="button" className="ml-3 h-[31px] w-[84px] rounded-[3px] border border-[#8f8661] bg-linear-to-b from-[#fffbe9] to-[#fbedb4]">Abbrechen</button>
        <button type="button" aria-label="Dismiss" className="ml-auto"><Cross size={7} color="#7e7758" /></button>
      </div>
      <main className="flex-1 px-[21px] pt-[30px]">
        <AddButton className="mx-auto" />
        <div className="mt-[30px] flex gap-10">
          <ProjectCard name="hello_world" />
          <ProjectCard name="ported_app" />
        </div>
      </main>
    </section>
  );
}

/* ---------- taskbar ---------- */

function Chrome({ mono }: { mono?: boolean }) {
  const c = mono ? ["#7fa5cf", "#5a86b8", "#a9c6e6", "#3f6ea8"] : ["#dd4b3e", "#1ea362", "#ffcd46", "#4a8af4"];
  return (
    <svg width="15" height="15" viewBox="0 0 16 16">
      <circle cx="8" cy="8" r="8" fill={c[2]} />
      <path d="M8 8 L1.070 4 A8 8 0 0 1 14.930 4 L8 4Z" fill={c[0]} />
      <path d="M1.070 4 A8 8 0 0 0 8 16 L11.500 10 L4.500 10Z" fill={c[1]} />
      <circle cx="8" cy="8" r="4" fill="#fff" /><circle cx="8" cy="8" r="3" fill={c[3]} />
    </svg>
  );
}

type Task = { label: string; icon: React.ReactNode; state?: "active" | "open" | "multi" };

const tasks: Task[] = [
  { label: "Start", icon: <svg width="16" height="16" viewBox="0 0 16 16"><path d="M0 2.200 L6.500 1.300 V7.500 H0Z M7.500 1.200 L16 0 V7.500 H7.500Z M0 8.500 H6.500 V14.700 L0 13.800Z M7.500 8.500 H16 V16 L7.500 14.800Z" fill="#fff" /></svg> },
  { label: "Cortana", icon: <svg width="16" height="16" viewBox="0 0 16 16"><circle cx="8" cy="8" r="6.700" fill="none" stroke="#fff" strokeWidth="2.200" /></svg> },
  { label: "Task view", icon: <svg width="20" height="14" viewBox="0 0 20 14"><path d="M4.500 0.500 H15.500 V13.500 H4.500Z M3 2 H0.500 V12 H3 M17 2 H19.500 V12 H17" fill="none" stroke="#fff" strokeWidth="1.200" /></svg> },
  { label: "Edge", icon: <svg width="16" height="16" viewBox="0 0 16 16"><path d="M0.800 7.200 Q1.500 0.500 8.300 0.300 Q15.300 0.500 15.300 7.500 V9.300 H5.300 Q5.500 12.500 9.300 12.800 Q12 12.900 14.300 11.600 V14.700 Q12 16 8.500 16 Q2.300 15.500 2 9.800 Q2 6.200 5.200 4.500 Q3 5 0.800 7.200Z M5.500 6.500 H10.800 Q10.500 3.700 8 3.700 Q5.800 4 5.500 6.500Z" fill="#0b7bd8" fillRule="evenodd" /></svg> },
  { label: "Store", icon: <svg width="15" height="16" viewBox="0 0 15 16"><path d="M0 4 H15 L14 16 H1Z" fill="#fff" /><path d="M5 4 V2.500 Q5 0.700 7.500 0.700 Q10 0.700 10 2.500 V4" stroke="#fff" fill="none" /><path d="M4 7 H7 V9.500 H4Z M8 6.700 H11.500 V9.500 H8Z M4 10.500 H7 V13 H4Z M8 10.500 H11.500 V13.400 H8Z" fill="#002b47" /></svg> },
  { label: "Paint", icon: <svg width="14" height="16" viewBox="0 0 14 16"><rect x="0.500" y="0.500" width="11" height="15" fill="#e9edf5" stroke="#9aa6b5" /><rect x="1.500" y="1.500" width="9" height="8" fill="#1f4f9e" /><path d="M2 6 L6 3.500 L8 5 L5 8 H2Z" fill="#86aee6" /><path d="M13.500 5 L5 12" stroke="#9c3b35" strokeWidth="1.500" /><path d="M4 13 H8" stroke="#333" /></svg> },
  { label: "Firefox", icon: <svg width="15" height="15" viewBox="0 0 16 16"><circle cx="8" cy="8" r="8" fill="#e66000" /><circle cx="8.500" cy="6" r="5" fill="#2d6fb5" /><path d="M1 4 Q3 5 5 4.500 Q7 6 7 8 Q9 10 12 9 Q14 8 14 4 Q18 11 12 15 Q5 18 1.500 12 Q-0.500 8 1 4Z" fill="#f98c1d" /><path d="M14 5 Q15 10 11 13 Q15 12 15.500 8Z" fill="#ffd24a" /></svg> },
  { label: "Chrome", icon: <Chrome />, state: "active" },
  { label: "PowerShell", icon: <svg width="17" height="13" viewBox="0 0 17 13"><path d="M3 0 H17 L14 13 H0Z" fill="#3a73c4" /><path d="M5 2.500 L9 6.300 L3.500 10.500 M8.500 10.500 H12.500" stroke="#fff" strokeWidth="1.500" fill="none" /></svg> },
  { label: "Command prompt", icon: <svg width="16" height="13" viewBox="0 0 16 13"><rect x="0.500" y="0.500" width="15" height="12" fill="#000" stroke="#c4c8cc" /><path d="M1 1.500 H15" stroke="#c4c8cc" strokeWidth="2" /><path d="M5 5.500 H2.500 V9 H5 M6.700 6 V7 M6.700 8 V9 M8.500 5 L10.500 9 M11 9.500 H13.500" stroke="#fff" fill="none" /></svg> },
  { label: "Unity", icon: <svg width="15" height="15" viewBox="0 0 15 15"><path d="M0 7.500 L8 0.500 L13.500 1 V14 L8 14.500Z" fill="#1a1a1a" /><path d="M1 7.500 L8 2 L11.500 1.800 L12.500 5.500 L12.500 9.500 L11.500 13.200 L8 13Z" fill="#e8e8e8" /><path d="M8 7.500 L2 7.500 M8 7.500 L11.500 2.500 M8 7.500 L11.500 12.500 M5 5.500 L3.500 7.500 L5 9.500" stroke="#1a1a1a" strokeWidth="1.600" fill="none" /></svg> },
  { label: "Snipping tool", icon: <svg width="16" height="17" viewBox="0 0 16 17"><ellipse cx="8" cy="6" rx="7" ry="4.800" fill="#f4f1ef" stroke="#c55a48" strokeWidth="1.700" /><path d="M8 4 L9 11 M11 4 L12.500 11" stroke="#7b8794" strokeWidth="1.200" /><circle cx="9.500" cy="13.500" r="1.700" fill="none" stroke="#2f86c9" strokeWidth="1.400" /><circle cx="13.500" cy="12.500" r="1.700" fill="none" stroke="#2f86c9" strokeWidth="1.400" /></svg> },
  { label: "Eclipse", icon: <svg width="16" height="15" viewBox="0 0 16 15"><circle cx="8" cy="7.500" r="7.500" fill="#3c2b66" /><path d="M1 5.500 H15 M1 7.500 H15 M1 9.500 H15" stroke="#d9d6ea" strokeWidth="1" /></svg> },
  { label: "MR", icon: <svg width="15" height="14" viewBox="0 0 15 14"><path d="M1.500 14 V4 Q1.500 1 4 1.500 Q5.500 2 5.500 5 V12 M5.500 4 Q6 1 8 1.500 Q9 2 9 5 V13" stroke="#e5a11c" strokeWidth="2.300" fill="none" /><path d="M10.500 14 V1.500 Q14 1.500 13.500 4.500 Q13 7 11 7 L14 13.500" stroke="#c5304f" strokeWidth="2" fill="none" /></svg> },
  { label: "Gears", icon: <svg width="16" height="16" viewBox="0 0 16 16"><rect width="16" height="16" fill="#f0f0f0" /><circle cx="8" cy="7.500" r="5.500" fill="none" stroke="#555" /><circle cx="8" cy="7.500" r="3" fill="none" stroke="#777" /><path d="M8 6 V9 M6.500 7.500 H9.500" stroke="#333" /><path d="M3 14.500 L5 12 M13 14.500 L11 12" stroke="#888" /></svg> },
  { label: "Drive", icon: <svg width="16" height="16" viewBox="0 0 16 16"><path d="M6 3 L14 4 L16 12 H0Z" fill="#cfd4d8" /><path d="M0 12 L16 12 V15 H0Z" fill="#8d959c" /><circle cx="10.500" cy="4" r="3" fill="#f8e9e9" stroke="#cf4a4a" strokeWidth="1.300" /><path d="M12 3 L6 8" stroke="#cf4a4a" /></svg> },
  { label: "Google", icon: <span className="flex size-4 items-center justify-center bg-white"><FcGoogle size={13} /></span> },
  { label: "Music", icon: <svg width="16" height="15" viewBox="0 0 16 15"><path d="M1 4 L13 1 V10 L2 13Z" fill="#f0a35a" /><path d="M7 11 V4.500 L14 2.500 V9.500" stroke="#000" strokeWidth="3.600" fill="none" /><path d="M7 11.500 V4.500 L14 2.500 V10 M7 6.500 L14 4.500" stroke="#fff" strokeWidth="1.300" fill="none" /><circle cx="5.300" cy="12" r="2.100" fill="#fff" stroke="#000" strokeWidth="0.800" /><circle cx="12.300" cy="10.500" r="2.100" fill="#fff" stroke="#000" strokeWidth="0.800" /></svg> },
  { label: "IntelliJ", icon: <IjIcon />, state: "multi" },
  { label: "Skype", icon: <svg width="16" height="16" viewBox="0 0 16 16"><rect width="16" height="16" rx="5" fill="#21b2ee" stroke="#8fdcfb" strokeWidth="0.800" /><path d="M11 5.300 Q10.500 3.500 8 3.500 Q5 3.500 5 5.500 Q5 7.200 8 7.800 Q11.200 8.500 11.200 10.300 Q11 12.500 8 12.500 Q5.300 12.500 4.800 10.500" stroke="#fff" strokeWidth="1.900" fill="none" /></svg> },
  { label: "Explorer", icon: <svg width="17" height="14" viewBox="0 0 17 14"><path d="M0.500 13.500 V0.500 H6 L7.500 2.500 H16.500 V13.500Z" fill="#fbe08b" /><path d="M3 13.500 V7 H14 V13.500 H11 V10 H6 V13.500Z" fill="#3fa0dc" /></svg>, state: "open" },
  { label: "Settings", icon: <svg width="14" height="14" viewBox="0 0 14 14"><circle cx="7" cy="7" r="3.700" fill="none" stroke="#fff" strokeWidth="2" /><circle cx="7" cy="7" r="5.700" fill="none" stroke="#fff" strokeWidth="2" strokeDasharray="2.200 2.280" /></svg> },
  { label: "GitHub", icon: <svg width="15" height="15" viewBox="0 0 15 15"><circle cx="7.500" cy="7.500" r="7.500" fill="#fff" /><path d="M3 3 L5.500 4 H9.500 L12 3 V8.500 Q12 11.500 7.500 11.800 Q3 11.500 3 8.500Z" fill="#4b2a86" /></svg> },
  { label: "Recorder", icon: <svg width="16" height="16" viewBox="0 0 16 16"><rect width="16" height="16" fill="#dc5757" /><circle cx="8" cy="8" r="5.500" fill="none" stroke="#f7dede" /><path d="M5.500 7 H7 V9 H5.500Z M9 7 H10.500 V9 H9Z" fill="#f7dede" /></svg> },
  { label: "Skype desktop", icon: <svg width="16" height="16" viewBox="0 0 16 16"><circle cx="4.500" cy="4.500" r="4.500" fill="#00aff0" /><circle cx="11.500" cy="11.500" r="4.500" fill="#00aff0" /><circle cx="8" cy="8" r="7" fill="#00aff0" /><path d="M10.800 5.500 Q10.300 4 8 4 Q5.200 4 5.200 5.800 Q5.200 7.300 8 7.900 Q11 8.500 11 10.200 Q10.800 12.200 8 12.200 Q5.500 12.200 5 10.400" stroke="#fff" strokeWidth="1.700" fill="none" /></svg>, state: "open" },
  { label: "Chromium", icon: <Chrome mono />, state: "open" },
];

function Taskbar() {
  return (
    <footer className="flex h-[30px] shrink-0 bg-[#002b47] text-white">
      <div className="flex gap-px">
        {tasks.map((t) => (
          <button type="button" key={t.label} aria-label={t.label} className={t.state === "active" ? "relative flex w-9 items-center justify-center bg-[#145a8a]" : "relative flex w-9 items-center justify-center"}>
            {t.icon}
            {t.state === "active" && <span className="absolute inset-x-0 bottom-0 h-0.5 bg-[#a6d8f8]" />}
            {t.state === "open" && <span className="absolute inset-x-1 bottom-0 h-0.5 bg-[#a6d8f8]" />}
            {t.state === "multi" && <span className="absolute inset-x-1 bottom-0 h-0.5 border-r-8 border-[#7a97ac] bg-[#a6d8f8]" />}
          </button>
        ))}
      </div>
      <div className="ml-auto flex items-center pr-1 text-[12px]">
        <svg className="mr-[9px]" width="12" height="8" viewBox="0 0 12 8"><path d="M0.500 7 L6 1.500 L11.500 7" stroke="#fff" strokeWidth="1.300" fill="none" /></svg>
        <svg className="mr-2.5" width="14" height="12" viewBox="0 0 14 12"><path d="M0.500 4 H2.500 L6 1 V11 L2.500 8 H0.500Z M8.500 3.500 L13.500 8.500 M13.500 3.500 L8.500 8.500" stroke="#fff" strokeWidth="1.100" fill="none" /></svg>
        <svg className="mr-[11px]" width="16" height="12" viewBox="0 0 16 12"><path d="M5.500 3.500 H14.500 V9.500 H5.500Z M1 1 V4 H5 V1 M3 4 V9 H5" stroke="#fff" fill="none" /><path d="M7 5 H13 V8 H7Z M15 5 H16 V8 H15Z" fill="#fff" /></svg>
        <svg className="mr-[11px]" width="12" height="12" viewBox="0 0 12 12"><path d="M1 11.500 A10.500 10.500 0 0 1 11.500 1 M4 11.500 A7.500 7.500 0 0 1 11.500 4 M7 11.500 A4.500 4.500 0 0 1 11.500 7" stroke="#fff" fill="none" /><circle cx="10.500" cy="10.500" r="1.500" fill="#fff" /></svg>
        <span className="mr-3">ENG</span>
        <time className="mr-[15px]">05:38</time>
        <button type="button" aria-label="Notifications" className="mr-[19px]">
          <svg width="16" height="16" viewBox="0 0 16 16"><path d="M0 0 H16 V13 H10 L8 16 L6 13 H0Z" fill="#fff" /><path d="M3 3.500 H13 M3 6.500 H13 M3 9.500 H9" stroke="#002b47" /></svg>
        </button>
        <span className="h-[30px] w-px bg-[#4d6b80]" />
      </div>
    </footer>
  );
}

export default function App() {
  return (
    <div className="flex h-screen flex-col overflow-hidden font-['Open_Sans',sans-serif]">
      <div className="flex min-h-0 flex-1">
        <section aria-label="GitHub window" className="flex min-w-0 flex-1 flex-col border border-[#0a97f0]">
          <LeftTabs />
          <LeftToolbar />
          <BookmarksBar />
          <LeftContent />
        </section>
        <RightWindow />
      </div>
      <Taskbar />
    </div>
  );
}
